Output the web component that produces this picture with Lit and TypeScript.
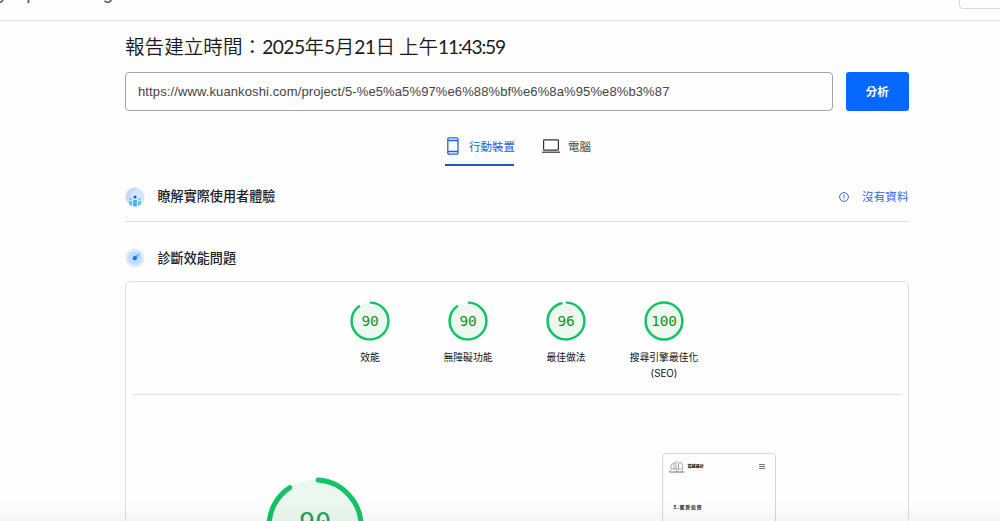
import { LitElement, html, css } from "lit";
import { customElement, property } from "lit/decorators.js";

@customElement("score-gauge")
class ScoreGauge extends LitElement {
  @property({ type: Number }) score = 100;
  @property() label = "";
  @property() note = "";

  static styles = css`
    :host { display: flex; flex-direction: column; align-items: center; width: 98px; }
    .ring { display: grid; place-items: center; width: 40px; height: 40px; }
    .ring > * { grid-area: 1 / 1; }
    svg { display: block; }
    .value { font: 14.5px/20px "DejaVu Sans Mono", monospace; letter-spacing: -.2px; color: #218f21; }
    .label { margin-top: 9px; font: 400 9.8px/16px Inter, "Noto Sans CJK TC", sans-serif; color: #111; white-space: nowrap; text-align: center; }
  `;

  render() {
    const c = 2 * Math.PI * 18.4;
    const full = this.score >= 100;
    const len = full ? c : (this.score / 100) * c - 1.8;
    return html`
      <div class="ring">
        <svg width="40" height="40" viewBox="0 0 40 40">
          <circle cx="20" cy="20" r="18" fill="#edf8f1" />
          <circle cx="20" cy="20" r="18.4" fill="none" stroke="#12c465" stroke-width="2.5" stroke-linecap="round"
            stroke-dasharray="${len} ${c}" transform="rotate(${full ? -90 : -87} 20 20)" />
        </svg>
        <span class="value">${this.score}</span>
      </div>
      <div class="label">${this.label}${this.note ? html`<br />${this.note}` : ""}</div>
    `;
  }
}

@customElement("app-root")
class AppRoot extends LitElement {
  static styles = css`
    :host { display: block; width: 1000px; height: 521px; overflow: hidden; background: #fefefe; color: #222;
      font-family: Roboto, "Noto Sans CJK TC", sans-serif; }
    * { box-sizing: border-box; }
    svg { display: block; flex: none; }
    header { display: flex; justify-content: space-between; height: 21px; border-bottom: 1px solid #e0e0e1; overflow: hidden; }
    .brand { margin: -19px 0 0 -28px; font-size: 19px; line-height: 24px; color: #555; white-space: nowrap; }
    .action { width: 60px; height: 28px; margin: -19px -19px 0 0; border: 1px solid #d5d7db; border-radius: 4px; }
    main { width: 783.5px; margin-left: 125px; }
    h1 { margin: 0; padding-top: 11px; height: 51px; font: 350 19.6px/28px "Noto Sans CJK TC", sans-serif; color: #1a1a1a; white-space: nowrap; word-spacing: -.5px; }
    .num { font-family: Lato, sans-serif; font-weight: 400; font-size: 19.2px; letter-spacing: -.55px; }
    .clock { letter-spacing: -1.2px; }
    .search { display: flex; gap: 13px; height: 39px; }
    .url { width: 708px; height: 39px; padding: 0 12px; border: 1px solid #a3a5a8; border-radius: 4px; font: 13px/37px "Liberation Sans", sans-serif; letter-spacing: .115px; color: #444; }
    .go { width: 62.5px; height: 39px; padding: 0; border: 0; border-radius: 3px; background: #0668ff; color: #fff; font: 700 11.5px/39px "Noto Sans CJK TC", sans-serif; }
    .tabs { display: flex; gap: 28px; height: 55px; padding: 20px 0 0 320px; }
    .tab { display: flex; align-items: center; height: 34px; font: 400 11.5px/28px "Noto Sans CJK TC", sans-serif; color: #444; padding-bottom: 4px; }
    .tab span { padding-bottom: 1px; }
    .on { color: #2361dc; border-bottom: 2px solid #1a57d2; width: 69px; height: 35px; white-space: nowrap; padding-bottom: 3px; }
    .phone { margin: 0 10px 0 2px; }
    .laptop { margin-right: 8px; }
    .section { display: flex; align-items: center; }
    .field { height: 56px; border-bottom: 1px solid #d9dbde; padding-top: 6px; }
    .lab { height: 59px; padding-top: 13px; }
    .heading { margin: 0 0 0 12.5px; font: 500 13.1px/24px "Noto Sans CJK TC", sans-serif; color: #202124; }
    .field .heading, .empty span { padding-bottom: 2px; }
    .empty { display: flex; align-items: center; gap: 13px; margin-left: auto; font: 400 11.6px/20px "Noto Sans CJK TC", sans-serif; color: #3468e8; }
    .card { height: 260px; border: 1px solid #dcdee1; border-radius: 6px; padding: 0 6px; }
    .scores { display: flex; justify-content: center; height: 113px; padding: 19px 0 0 .5px; border-bottom: 1px solid #e3e3e4; }
    .detail { display: flex; justify-content: space-between; height: 145px; padding: 0 126px 0 134px; }
    .big { display: grid; width: 98px; height: 98px; margin-top: 82px; justify-items: center; }
    .big > * { grid-area: 1 / 1; }
    .bignum { margin-top: 26px; font: 27px/40px "DejaVu Sans Mono", monospace; letter-spacing: -.3px; color: #1fa455; }
    .shot { width: 114px; height: 120px; margin-top: 58px; border: 1px solid #d4d5d7; border-radius: 4px 4px 0 0; padding: 4px 10px 0 6px; }
    .bar { display: flex; align-items: center; height: 16px; }
    .site { margin-left: 3px; font: 900 4.1px/6px "Noto Sans CJK TC", sans-serif; color: #222; }
    .menu { margin-left: auto; }
    .caption { margin: 27px 0 0 5px; font: 700 5px/12px "Noto Sans CJK TC", sans-serif; letter-spacing: .7px; color: #222; }
    .shade { position: absolute; left: 0; right: 0; top: 500px; height: 21px; background: linear-gradient(#0000, #00000009); }
  `;

  render() {
    const c = 2 * Math.PI * 46;
    return html`
      <header><div class="brand">PageSpeed Insights</div><div class="action"></div></header>
      <main>
        <h1>報告建立時間：<span class="num">2025</span>年<span class="num">5</span>月<span class="num">21</span>日 上午<span class="num clock">11:43:59</span></h1>
        <div class="search">
          <div class="url">https://www.kuankoshi.com/project/5-%e5%a5%97%e6%88%bf%e6%8a%95%e8%b3%87</div>
          <button class="go">分析</button>
        </div>
        <nav class="tabs">
          <div class="tab on">
            <svg class="phone" width="12" height="18" viewBox="0 0 12 18" fill="none" stroke="#2361dc" stroke-width="1.3">
              <rect x=".8" y=".8" width="10.2" height="16.4" rx="1.2" /><path d="M1 3.5h10M1 14.5h10" />
            </svg><span>行動裝置</span>
          </div>
          <div class="tab">
            <svg class="laptop" width="18" height="14" viewBox="0 0 18 14" fill="none" stroke="#333" stroke-width="1.2">
              <rect x="1.6" y=".8" width="14.8" height="10.4" rx=".8" /><path d="M0 13.2h18" />
            </svg><span>電腦</span>
          </div>
        </nav>
        <section class="section field">
          <svg width="20" height="20" viewBox="0 0 20 20">
            <defs><clipPath id="disc"><circle cx="10" cy="10" r="9.6" /></clipPath></defs>
            <g clip-path="url(#disc)">
              <rect width="20" height="20" fill="#d5e7fc" />
              <path d="M0 14V0h14Q5 5 4 14z" fill="#c1daf8" />
              <path d="M4 14h3v6H4zM13 14h3v6h-3z" fill="#67c2f8" /><path d="M8.2 13h3.6v7H8.2z" fill="#46b0f4" />
              <circle cx="5.5" cy="12" r="1.1" fill="#55b5f6" /><circle cx="14.5" cy="12" r="1.1" fill="#55b5f6" />
              <circle cx="10" cy="10" r="1.6" fill="#1760e5" />
            </g>
          </svg>
          <h2 class="heading">瞭解實際使用者體驗</h2>
          <div class="empty">
            <svg width="10" height="10" viewBox="0 0 10 10" fill="none" stroke="#3468e8"><circle cx="5" cy="5" r="4.4" /><path d="M5 2.5v3M5 6.5v1" /></svg>
            <span>沒有資料</span>
          </div>
        </section>
        <section class="section lab">
          <svg width="20" height="20" viewBox="0 0 20 20">
            <circle cx="10" cy="10" r="9.4" fill="#deebfd" /><circle cx="10" cy="10" r="6.8" fill="#bfddfd" />
            <path d="M15.5 4.7 11.7 11.5 8.5 8.5z" fill="#70b9fa" /><circle cx="9.8" cy="10.2" r="2.1" fill="#1673ef" />
          </svg>
          <h2 class="heading">診斷效能問題</h2>
        </section>
        <section class="card">
          <div class="scores">
            <score-gauge score="90" label="效能"></score-gauge>
            <score-gauge score="90" label="無障礙功能"></score-gauge>
            <score-gauge score="96" label="最佳做法"></score-gauge>
            <score-gauge score="100" label="搜尋引擎最佳化" note="(SEO)"></score-gauge>
          </div>
          <div class="detail">
            <div class="big">
              <svg width="98" height="98" viewBox="0 0 98 98">
                <circle cx="49" cy="49" r="46" fill="#ebf8f0" />
                <circle cx="49" cy="49" r="46" fill="none" stroke="#12c465" stroke-width="5" stroke-linecap="round"
                  stroke-dasharray="${c * 0.895} ${c}" transform="rotate(-86 49 49)" />
              </svg>
              <span class="bignum">90</span>
            </div>
            <div class="shot">
              <div class="bar">
                <svg width="16" height="13" viewBox="0 0 16 13" fill="none" stroke="#888" stroke-width=".7">
                  <path d="M2 9V5L5 3V9M5 3q3-3 4.5 0V9M7 3v6M9.5 3q3-2 4 2v4M2 9h12" />
                  <text x="0" y="12.5" font-size="4" textLength="15" font-family="Liberation Sans" fill="#555" stroke="none">KuanKoshi</text>
                </svg>
                <span class="site">寬越設計</span>
                <svg class="menu" width="6" height="6" viewBox="0 0 6 6" stroke="#777" stroke-width="1"><path d="M0 1.5h6M0 3.5h6M0 5.5h6" /></svg>
              </div>
              <div class="caption">5.套房投資</div>
            </div>
          </div>
        </section>
      </main>
      <div class="shade"></div>
    `;
  }
}
